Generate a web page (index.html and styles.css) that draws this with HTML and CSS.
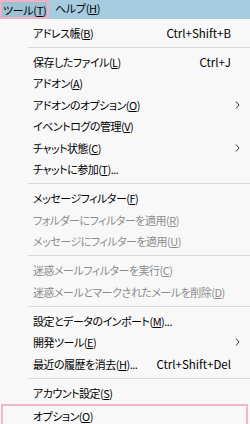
FILE: index.html
```html
<!DOCTYPE html>
<html lang="ja">
<head>
    <meta charset="UTF-8">
    <title>ツールメニュー</title>
    <link rel="stylesheet" href="styles.css">
</head>
<body>
    <div class="menubar">
        <span class="bar-item active">ツール(<u>T</u>)</span>
        <span class="bar-item">ヘルプ(<u>H</u>)</span>
    </div>
    <ul class="menu">
        <li class="item"><span class="label">アドレス帳(<u>B</u>)</span><span class="accel">Ctrl+Shift+B</span><span class="arrow"></span></li>
        <li class="sep"></li>
        <li class="item"><span class="label">保存したファイル(<u>L</u>)</span><span class="accel">Ctrl+J</span><span class="arrow"></span></li>
        <li class="item"><span class="label">アドオン(<u>A</u>)</span><span class="arrow"></span></li>
        <li class="item"><span class="label">アドオンのオプション(<u>O</u>)</span><span class="arrow"><svg width="5" height="8" viewBox="0 0 5 8"><path d="M1 0.5 L4 4 L1 7.5" fill="none" stroke="#333" stroke-width="1"/></svg></span></li>
        <li class="item"><span class="label">イベントログの管理(<u>V</u>)</span><span class="arrow"></span></li>
        <li class="item"><span class="label">チャット状態(<u>C</u>)</span><span class="arrow"><svg width="5" height="8" viewBox="0 0 5 8"><path d="M1 0.5 L4 4 L1 7.5" fill="none" stroke="#333" stroke-width="1"/></svg></span></li>
        <li class="item"><span class="label">チャットに参加(<u>T</u>)...</span><span class="arrow"></span></li>
        <li class="sep"></li>
        <li class="item"><span class="label">メッセージフィルター(<u>F</u>)</span><span class="arrow"></span></li>
        <li class="item disabled"><span class="label">フォルダーにフィルターを適用(<u>R</u>)</span><span class="arrow"></span></li>
        <li class="item disabled"><span class="label">メッセージにフィルターを適用(<u>U</u>)</span><span class="arrow"></span></li>
        <li class="sep"></li>
        <li class="item disabled"><span class="label">迷惑メールフィルターを実行(<u>C</u>)</span><span class="arrow"></span></li>
        <li class="item disabled"><span class="label">迷惑メールとマークされたメールを削除(<u>D</u>)</span><span class="arrow"></span></li>
        <li class="sep"></li>
        <li class="item"><span class="label">設定とデータのインポート(<u>M</u>)...</span><span class="arrow"></span></li>
        <li class="item"><span class="label">開発ツール(<u>E</u>)</span><span class="arrow"><svg width="5" height="8" viewBox="0 0 5 8"><path d="M1 0.5 L4 4 L1 7.5" fill="none" stroke="#333" stroke-width="1"/></svg></span></li>
        <li class="item"><span class="label">最近の履歴を消去(<u>H</u>)...</span><span class="accel">Ctrl+Shift+Del</span><span class="arrow"></span></li>
        <li class="sep"></li>
        <li class="item"><span class="label">アカウント設定(<u>S</u>)</span><span class="arrow"></span></li>
        <li class="item selected"><span class="label">オプション(<u>O</u>)</span><span class="arrow"></span></li>
    </ul>
</body>
</html>
```

FILE: styles.css
```css
body {
    margin: 0;
    width: 250px;
    height: 424px;
    overflow: hidden;
    background-color: #f8f8f8;
    font-family: "Noto Sans CJK JP", sans-serif;
    font-size: 11px;
    font-feature-settings: "palt";
    color: #000;
}

u {
    text-underline-offset: 1px;
}

.menubar {
    display: flex;
    height: 19px;
    background-color: #a7cce0;
}

.bar-item {
    display: block;
    white-space: nowrap;
    padding: 0 6px 0 2px;
    line-height: 17px;
    letter-spacing: -0.3px;
}

.bar-item.active {
    box-sizing: border-box;
    width: 49px;
    height: 19px;
    background-color: #9cc0d4;
    border: 2px solid #f2b0c6;
    padding-left: 1px;
    margin-right: 4px;
}

.menu {
    list-style: none;
    margin: 0;
    padding: 3px 0 0 0;
}

.item {
    display: flex;
    align-items: center;
    height: 21.5px;
    padding-left: 33px;
}

.label {
    flex: 1;
    white-space: nowrap;
    letter-spacing: -0.5px;
}

.accel {
    white-space: nowrap;
    font-size: 11.5px;
    font-feature-settings: normal;
}

.arrow {
    width: 19px;
    display: flex;
    justify-content: flex-end;
    padding-right: 10px;
    box-sizing: border-box;
}

.disabled {
    color: #8c8c8c;
}

.sep {
    height: 1px;
    margin: 3px 0 3.5px 28px;
    background-color: #d9d9d9;
}

.selected {
    box-sizing: border-box;
    height: 25px;
    margin: 0 2px 0 1px;
    padding-left: 30px;
    border: 2px solid #f4b6cb;
}
```
